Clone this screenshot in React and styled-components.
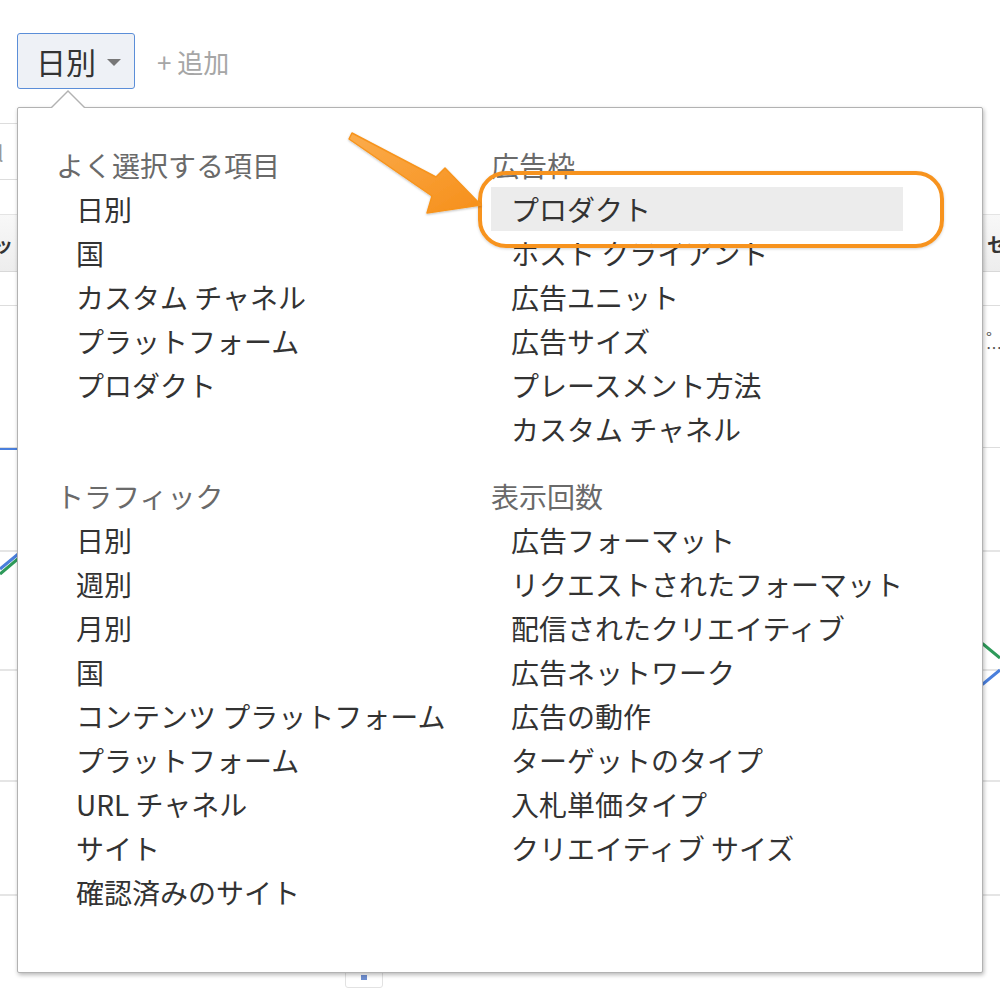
import React from 'react';
import styled, { createGlobalStyle } from 'styled-components';

const GlobalStyle = createGlobalStyle`
  html, body { margin: 0; padding: 0; background: #fff; }
  body {
    font-family: "Noto Sans CJK JP", "Noto Sans", sans-serif;
  }
`;

const Page = styled.div`
  position: relative;
  width: 1000px;
  height: 990px;
  overflow: hidden;
  background: #fff;
  color: #333;
`;

// top toolbar
const Toolbar = styled.div`
  display: flex;
  align-items: center;
  gap: 22px;
  padding: 33px 0 0 17px;
  height: 56px;
`;

const DropButton = styled.div`
  box-sizing: border-box;
  width: 118px;
  height: 56px;
  display: flex;
  align-items: center;
  gap: 11px;
  padding-left: 18px;
  border: 1px solid #5b8ed8;
  border-radius: 3px;
  background: #eef1f6;
  font-size: 30px;
  color: #333;
`;

const Caret = styled.span`
  width: 0;
  height: 0;
  margin-top: 2px;
  border-left: 7px solid transparent;
  border-right: 7px solid transparent;
  border-top: 7px solid #777;
`;

const AddLink = styled.span`
  font-size: 26px;
  color: #a6a6a6;
`;

// background table + chart, mostly hidden under the menu
const FilterRow = styled.div`
  box-sizing: border-box;
  margin-top: 34px;
  width: 420px;
  height: 57px;
  border-top: 1px solid #ddd;
  border-bottom: 1px solid #ddd;
  display: flex;
  align-items: center;
  font-size: 22px;
  color: #999;
  span { margin-left: -9px; }
`;

const TableHeader = styled.div`
  box-sizing: border-box;
  margin-top: 34px;
  height: 58px;
  display: flex;
  align-items: center;
  justify-content: space-between;
  background: linear-gradient(#f8f8f8, #ededed);
  border-top: 1px solid #e4e4e4;
  border-bottom: 1px solid #d8d8d8;
  font-size: 19px;
  font-weight: 700;
  color: #333;
  span:first-child { margin-left: -6px; }
  span:last-child { margin-right: -6px; }
`;

const TableRow = styled.div`
  box-sizing: border-box;
  height: ${p => p.$h}px;
  border-bottom: 1px solid #ddd;
  display: flex;
  justify-content: flex-end;
  padding-top: ${p => p.$pt || 0}px;
  font-size: 16px;
  line-height: 10px;
  color: #555;
  span { width: 14px; white-space: pre; }
`;

const Chart = styled.svg`
  display: block;
  width: 1000px;
  height: 518px;
`;

const Handle = styled.div`
  box-sizing: border-box;
  margin: 4px 0 0 345px;
  width: 38px;
  height: 18px;
  border: 1px solid #e2e2e2;
  border-radius: 3px;
  display: flex;
  justify-content: center;
  padding-top: 4px;
  &::after {
    content: '';
    width: 6px;
    height: 5px;
    background: #6f8fd0;
  }
`;

// dropdown menu
const Menu = styled.div`
  position: absolute;
  left: 17px;
  top: 107px;
  box-sizing: border-box;
  width: 966px;
  height: 866px;
  padding: 35px 0 0 38px;
  background: #fff;
  border: 1px solid #b2b2b2;
  border-radius: 2px;
  box-shadow: 1px 2px 4px rgba(0, 0, 0, 0.28);
  display: grid;
  grid-template-columns: 435px 412px;
  grid-template-rows: 308px auto;
  row-gap: 23px;
  align-content: start;

  &::before, &::after {
    content: '';
    position: absolute;
    left: 33px;
    width: 0;
    height: 0;
    border-left: 17px solid transparent;
    border-right: 17px solid transparent;
  }
  &::before {
    top: -18px;
    border-bottom: 17px solid #b2b2b2;
  }
  &::after {
    top: -16px;
    border-bottom: 17px solid #fff;
  }
`;

const Section = styled.div`
  display: flex;
  flex-direction: column;
`;

const Heading = styled.div`
  font-size: 28px;
  line-height: 44px;
  color: #6a6a6a;
`;

const Item = styled.div`
  font-size: 28px;
  line-height: 44px;
  padding-left: 20px;
  color: #333;
  white-space: nowrap;
  background: ${p => (p.$active ? '#ececec' : 'transparent')};
`;

// annotation overlay
const Ring = styled.div`
  position: absolute;
  left: 478px;
  top: 171px;
  width: 466px;
  height: 77px;
  box-sizing: border-box;
  border: 4.5px solid #f7931e;
  border-radius: 28px;
  box-shadow: 0 1px 3px rgba(0, 0, 0, 0.18);
`;

const ArrowSvg = styled.svg`
  position: absolute;
  left: 340px;
  top: 125px;
  width: 150px;
  height: 95px;
  overflow: visible;
`;

const sections = [
  {
    title: 'よく選択する項目',
    items: ['日別', '国', 'カスタム チャネル', 'プラットフォーム', 'プロダクト'],
  },
  {
    title: '広告枠',
    items: ['プロダクト', 'ホスト クライアント', '広告ユニット', '広告サイズ', 'プレースメント方法', 'カスタム チャネル'],
    active: 0,
  },
  {
    title: 'トラフィック',
    items: ['日別', '週別', '月別', '国', 'コンテンツ プラットフォーム', 'プラットフォーム', 'URL チャネル', 'サイト', '確認済みのサイト'],
  },
  {
    title: '表示回数',
    items: ['広告フォーマット', 'リクエストされたフォーマット', '配信されたクリエイティブ', '広告ネットワーク', '広告の動作', 'ターゲットのタイプ', '入札単価タイプ', 'クリエイティブ サイズ'],
  },
];

const gridLines = [103, 222, 333, 447];

export default function App() {
  return (
    <>
      <GlobalStyle />
      <Page>
        <Toolbar>
          <DropButton>
            日別
            <Caret />
          </DropButton>
          <AddLink>+ 追加</AddLink>
        </Toolbar>

        <FilterRow>
          <span>ll</span>
        </FilterRow>
        <TableHeader>
          <span>ッ</span>
          <span>セ</span>
        </TableHeader>
        <TableRow $h={34} />
        <TableRow $h={142} $pt={26}>
          <span>{'°\n…'}</span>
        </TableRow>
        <Chart viewBox="0 0 1000 518">
          {gridLines.map(y => (
            <line key={y} x1="0" x2="1000" y1={y} y2={y} stroke="#dcdcdc" strokeWidth="1.5" />
          ))}
          <line x1="0" x2="120" y1="0" y2="0" stroke="#4a7fdc" strokeWidth="4" />
          <polyline points="0,126 40,92 500,150 983,196 1000,210" fill="none" stroke="#2e9a5a" strokeWidth="3" />
          <polyline points="0,121 40,88 500,230 983,236 1000,222" fill="none" stroke="#4a7fdc" strokeWidth="3" />
        </Chart>
        <Handle />

        <Menu>
          {sections.map(s => (
            <Section key={s.title}>
              <Heading>{s.title}</Heading>
              {s.items.map((it, i) => (
                <Item key={it} $active={s.active === i}>{it}</Item>
              ))}
            </Section>
          ))}
        </Menu>

        <Ring />
        <ArrowSvg viewBox="340 125 150 95">
          <defs>
            <linearGradient id="arrowFill" x1="0" y1="0" x2="1" y2="1">
              <stop offset="0" stopColor="#fbac4c" />
              <stop offset="1" stopColor="#f68f1a" />
            </linearGradient>
            <filter id="arrowShadow" x="-20%" y="-20%" width="140%" height="140%">
              <feDropShadow dx="0" dy="1" stdDeviation="1.2" floodColor="#000" floodOpacity="0.25" />
            </filter>
          </defs>
          <polygon
            points="352,133 436,177 445,168 481,205 427,213 432,196 349,139"
            fill="url(#arrowFill)"
            stroke="#f7941d"
            strokeWidth="1.5"
            strokeLinejoin="round"
            filter="url(#arrowShadow)"
          />
        </ArrowSvg>
      </Page>
    </>
  );
}
